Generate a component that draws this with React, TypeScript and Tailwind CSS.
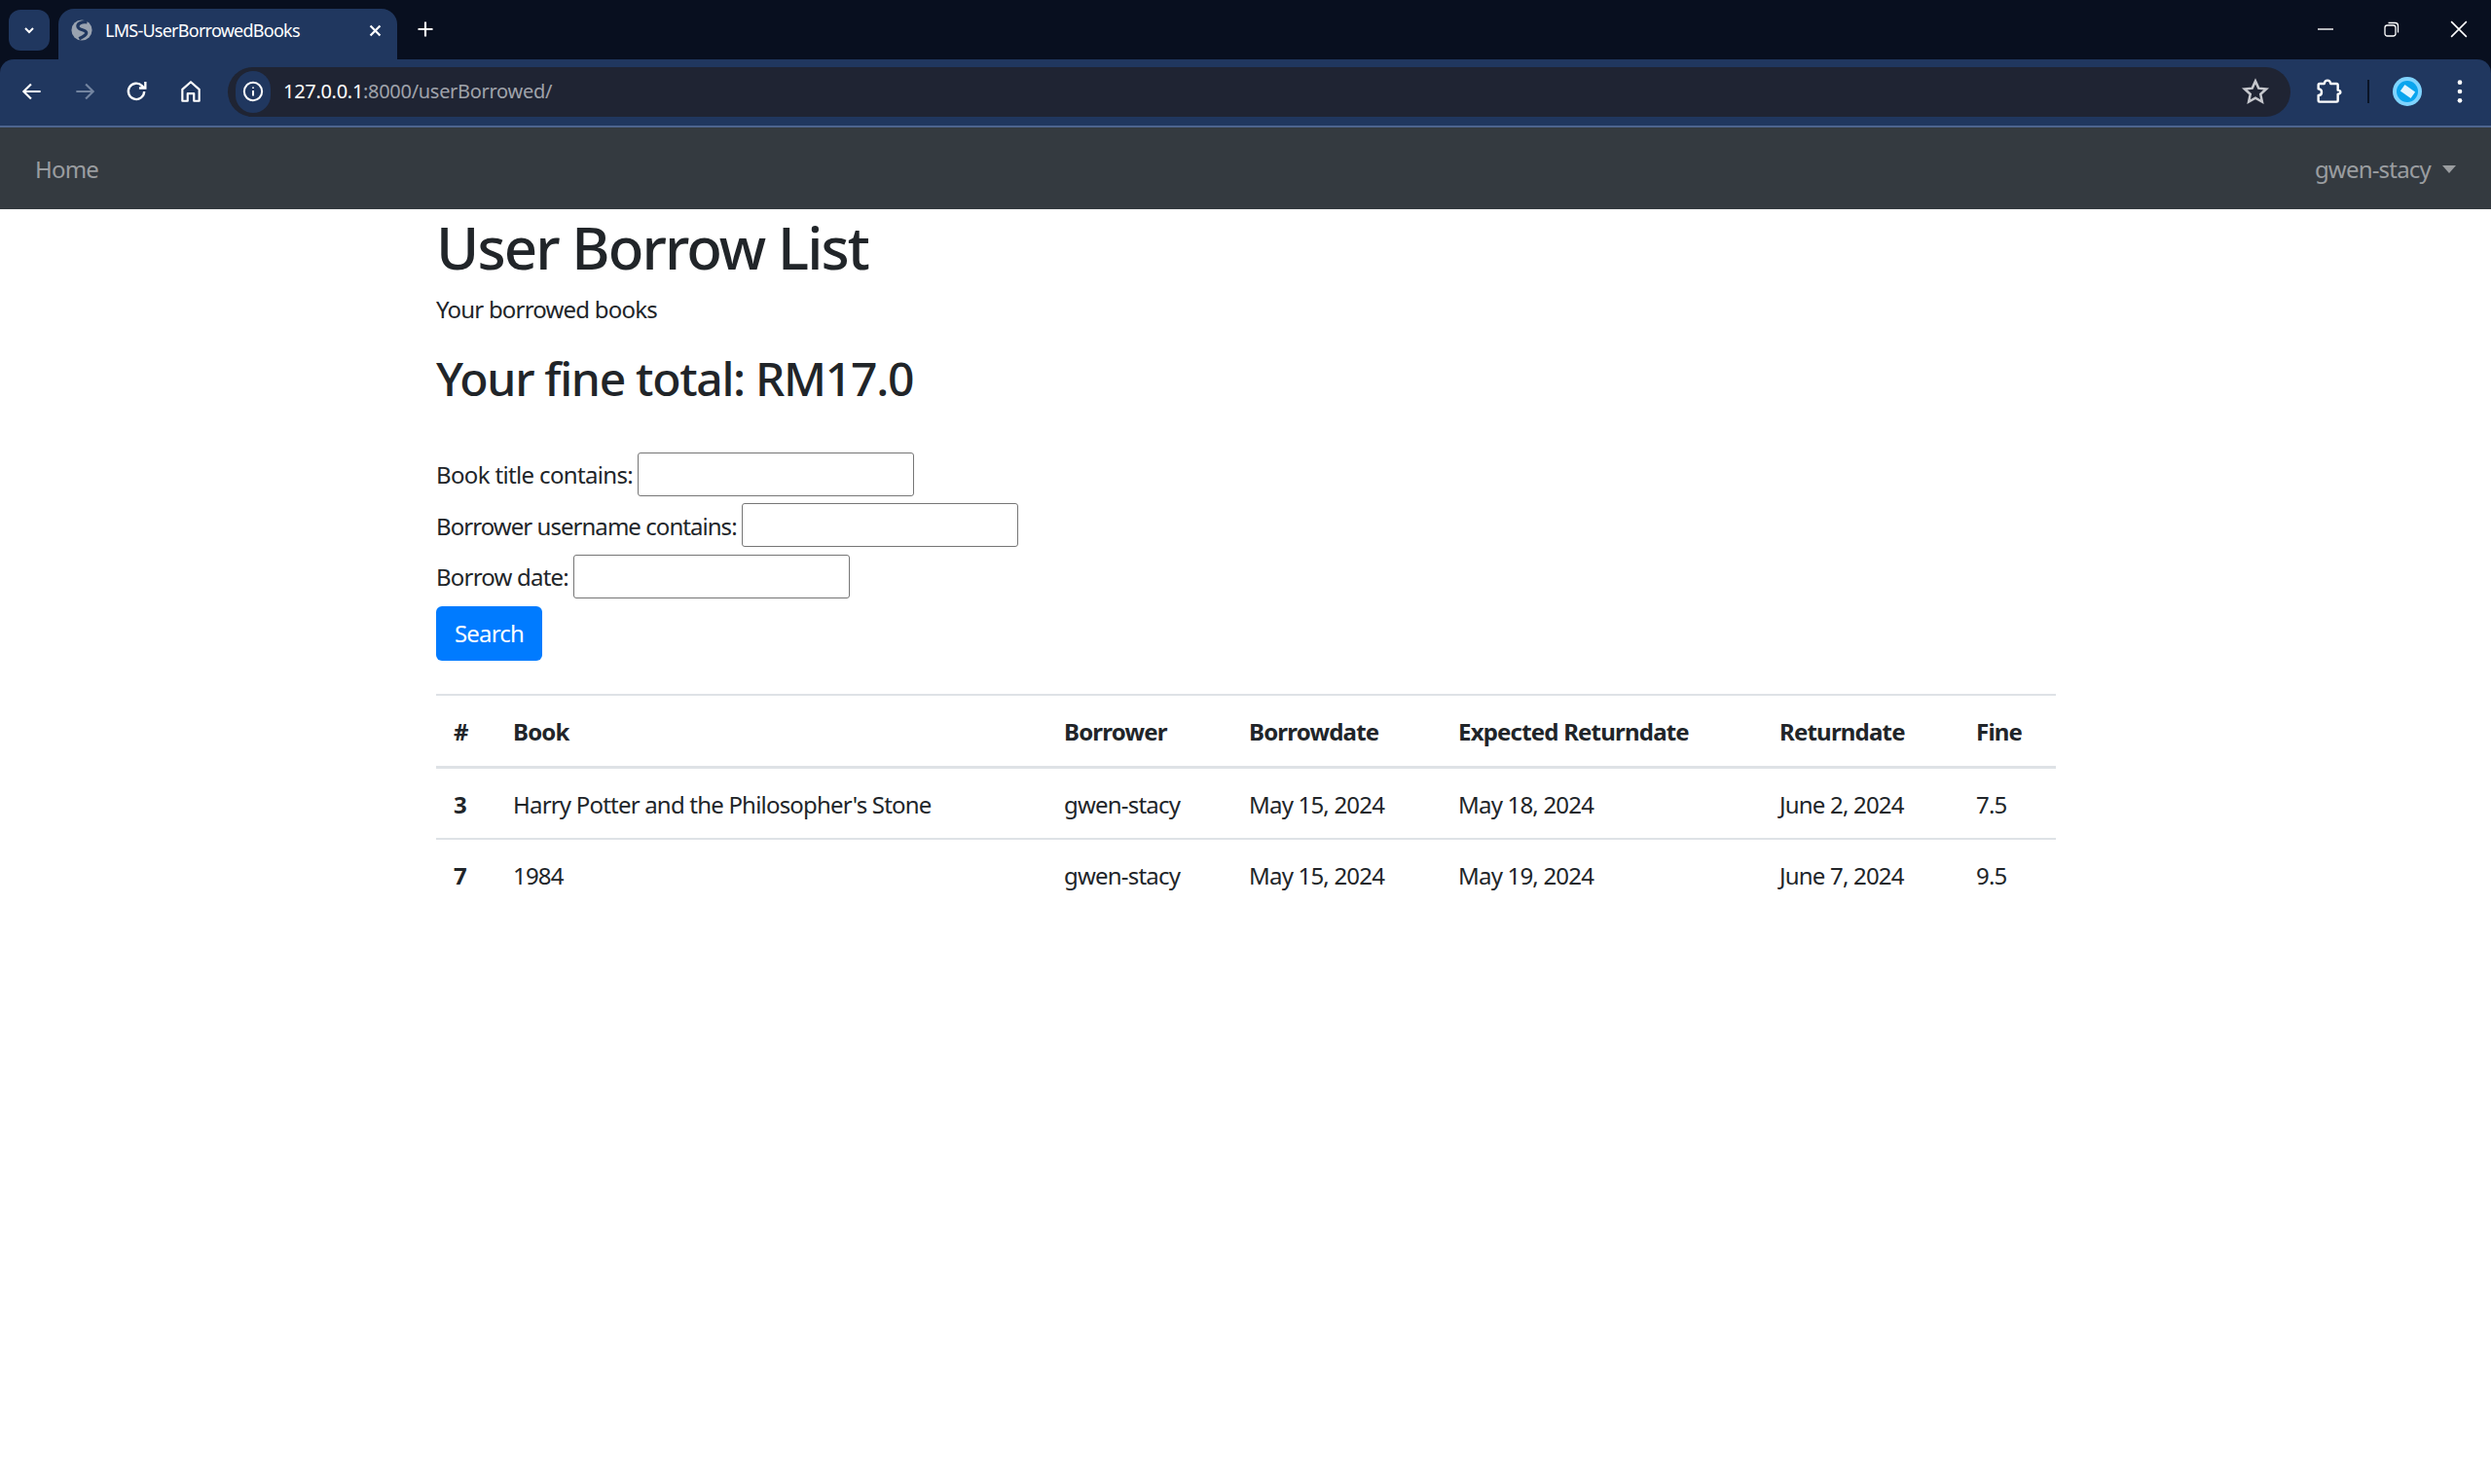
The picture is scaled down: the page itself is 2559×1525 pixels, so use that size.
import React from "react";

const rows = [
  { id: 3, book: "Harry Potter and the Philosopher's Stone", borrower: "gwen-stacy", borrowed: "May 15, 2024", expected: "May 18, 2024", returned: "June 2, 2024", fine: "7.5" },
  { id: 7, book: "1984", borrower: "gwen-stacy", borrowed: "May 15, 2024", expected: "May 19, 2024", returned: "June 7, 2024", fine: "9.5" },
];

const Icon = ({ className, children }: { className?: string; children: React.ReactNode }) => (
  <svg viewBox="0 0 24 24" fill="none" stroke="currentColor" strokeWidth="2" className={className}>
    {children}
  </svg>
);

const BrowserChrome = () => (
  <div className="bg-[#080f1f] text-white">
    <div className="flex h-[61px] items-end">
      <div className="mb-[9px] ml-[9px] flex h-[42px] w-[42px] items-center justify-center rounded-[12px] bg-[#20375f]">
        <svg viewBox="0 0 24 24" className="h-[16px] w-[16px]" fill="none" stroke="white" strokeWidth="3">
          <path d="M6 9l6 6 6-6" />
        </svg>
      </div>
      <div className="ml-[9px] flex h-[52px] w-[348px] items-center rounded-t-[16px] bg-[#20375f] pb-[8px] pl-[13px] pr-[14px]">
        <svg viewBox="0 0 24 24" className="h-[22px] w-[22px] shrink-0">
          <circle cx="12" cy="12" r="11.500" fill="#9aa3b0" />
          <path d="M18 3C12 2 6 5 8 9c2 3.500 8 2 9 5.500 .8 3-4 5-8 7" fill="none" stroke="#20375f" strokeWidth="3.600" />
        </svg>
        <span className="ml-[13px] flex-1 font-['Noto_Sans',sans-serif] text-[18px] tracking-[-0.75px] text-white">LMS-UserBorrowedBooks</span>
        <svg viewBox="0 0 24 24" className="h-[17px] w-[17px]" fill="none" stroke="white" strokeWidth="3.2">
          <path d="M5 5l14 14M19 5L5 19" />
        </svg>
      </div>
      <div className="mb-[11px] ml-[19px] flex h-[40px] w-[20px] items-center justify-center">
        <svg viewBox="0 0 24 24" className="h-[20px] w-[20px]" fill="none" stroke="white" strokeWidth="2.6">
          <path d="M12 3v18M3 12h18" />
        </svg>
      </div>
      <div className="mb-[13px] ml-auto mr-[11px] flex h-[36px] items-center">
        <svg viewBox="0 0 16 16" className="h-[16px] w-[16px]" stroke="white" strokeWidth="1.4"><path d="M0 8h16" /></svg>
        <svg viewBox="0 0 16 16" className="ml-[52px] h-[16px] w-[16px]" fill="none" stroke="white" strokeWidth="1.3">
          <rect x="1" y="4" width="11" height="11" rx="2.5" />
          <path d="M4.5 1.5h7a3 3 0 0 1 3 3v7" />
        </svg>
        <svg viewBox="0 0 16 16" className="ml-[52px] mr-[13px] h-[18px] w-[18px]" stroke="white" strokeWidth="1.4"><path d="M1 1l14 14M15 1L1 15" /></svg>
      </div>
    </div>
    <div className="flex h-[70px] items-center rounded-t-[14px] border-b-[2px] border-[#4d648e] bg-[#20375f] pb-[2px]">
      <Icon className="ml-[20px] h-[26px] w-[26px]"><path d="M20 12H5M11 5l-7 7 7 7" /></Icon>
      <Icon className="ml-[28px] h-[26px] w-[26px] text-[#7384a0]"><path d="M4 12h15M13 5l7 7-7 7" /></Icon>
      <Icon className="ml-[26px] h-[28px] w-[28px]"><path d="M19 12a7 7 0 1 1-2-5l2 2M20 3.5V9h-5.500" /></Icon>
      <Icon className="ml-[29px] h-[26px] w-[26px]"><path d="M4 21V10l8-7 8 7v11h-5v-7H9v7z" strokeLinejoin="round" /></Icon>
      <div className="ml-[25px] flex h-[51px] flex-1 items-center rounded-full bg-[#1f2433] pl-[8px]">
        <div className="flex h-[43px] w-[36px] items-center justify-center rounded-full bg-[#20375f]">
          <svg viewBox="0 0 24 24" className="h-[22px] w-[22px]" fill="none" stroke="white" strokeWidth="2.2">
            <circle cx="12" cy="12" r="10" />
            <path d="M12 11v6M12 7v1.500" />
          </svg>
        </div>
        <span className="ml-[13px] font-['Noto_Sans',sans-serif] text-[20px] tracking-[-0.3px] text-white">
          127.0.0.1<span className="text-[#a0a3ab]">:8000/userBorrowed/</span>
        </span>
        <svg viewBox="0 0 24 24" className="ml-auto mr-[21px] h-[30px] w-[30px]" fill="none" stroke="#c5c7cc" strokeWidth="2">
          <path d="M12 3.500l2.600 5.800 6.300.7-4.700 4.200 1.300 6.200L12 17.300l-5.500 3.100 1.300-6.200L3.100 10l6.300-.7z" />
        </svg>
      </div>
      <svg viewBox="0 0 24 24" className="ml-[22px] h-[32px] w-[32px]" fill="none" stroke="white" strokeWidth="1.800">
        <path d="M6 6h3.500c.3-1.500 1.300-2.500 2.500-2.500s2.200 1 2.500 2.500H19a1 1 0 0 1 1 1v4c1.200.2 2 .8 2 1.500s-.8 1.300-2 1.500v5a1 1 0 0 1-1 1H6a1 1 0 0 1-1-1v-4c1.500 0 2.500-1 2.500-2.500S6.500 10 5 10V7a1 1 0 0 1 1-1z" strokeLinejoin="round" />
      </svg>
      <div className="ml-[25px] h-[24px] w-[2px] bg-[#0a1426]" />
      <div className="ml-[24px] flex h-[30px] w-[30px] items-center justify-center rounded-full bg-[#7fd4ff]">
        <div className="flex h-[22px] w-[22px] items-center justify-center rounded-full bg-[#0aa5ee]">
          <div className="h-[8px] w-[13px] rotate-[35deg] bg-[#e2f5ff]" />
        </div>
      </div>
      <svg viewBox="0 0 24 24" className="ml-[25px] mr-[18px] h-[28px] w-[28px]" fill="white">
        <circle cx="12" cy="4" r="2" />
        <circle cx="12" cy="12" r="2" />
        <circle cx="12" cy="20" r="2" />
      </svg>
    </div>
  </div>
);

const Filter = ({ label, labelClass }: { label: string; labelClass: string }) => (
  <p className="mb-[8.500px] flex h-[44px] items-center">
    <label className={labelClass}>{label}</label>
    <input type="text" className="ml-[5px] h-[45px] w-[284px] rounded-[3px] border border-[#767676] bg-white" />
  </p>
);

export default function App() {
  return (
    <div className="min-h-[1525px] bg-white font-['Noto_Sans',sans-serif] text-[24px] leading-[36px] tracking-[-0.8px] text-[#212529]">
      <BrowserChrome />
      <nav className="flex h-[84px] items-center justify-between bg-[#343a40] px-[36px] pt-[2px] text-[#9a9da0]">
        <span>Home</span>
        <span className="flex items-center">
          gwen-stacy
          <span className="ml-[12px] h-0 w-0 border-x-[7px] border-t-[8px] border-x-transparent border-t-[#9a9da0]" />
        </span>
      </nav>
      <main className="mx-[448px] w-[1664px]">
        <h1 className="pt-[3px] text-[60px] font-medium leading-[72px] tracking-[-1.900px]">User Borrow List</h1>
        <p className="mt-[10px] mb-[24px]">Your borrowed books</p>
        <h2 className="mb-[47px] text-[48px] font-medium leading-[58px] tracking-[-1.300px]">Your fine total: RM17.0</h2>
        <form>
          <Filter label="Book title contains:" labelClass="pt-[2px] tracking-[-0.65px]" />
          <Filter label="Borrower username contains:" labelClass="pt-[2px] tracking-[-0.95px]" />
          <Filter label="Borrow date:" labelClass="pt-[2px] tracking-[-0.8px]" />
          <button type="button" className="h-[56px] w-[109px] rounded-[6px] bg-[#007bff] text-white">Search</button>
        </form>
        <table className="mt-[34px] w-[1664px] table-fixed border-collapse border-t-2 border-[#dee2e6] text-left">
          <thead>
            <tr className="h-[75px] border-b-[3px] border-[#dee2e6]">
              <th className="w-[61px] pl-[18px] pt-[2px] font-bold">#</th>
              <th className="w-[566px] pl-[18px] pt-[2px] font-bold">Book</th>
              <th className="w-[190px] pl-[18px] pt-[2px] font-bold">Borrower</th>
              <th className="w-[215px] pl-[18px] pt-[2px] font-bold">Borrowdate</th>
              <th className="w-[330px] pl-[18px] pt-[2px] font-bold">Expected Returndate</th>
              <th className="w-[202px] pl-[18px] pt-[2px] font-bold">Returndate</th>
              <th className="w-[100px] pl-[18px] pt-[2px] font-bold">Fine</th>
            </tr>
          </thead>
          <tbody>
            {rows.map((row, i) => (
              <tr key={row.id} className={i === 0 ? "h-[73px] border-b-2 border-[#dee2e6]" : "h-[73px]"}>
                <th className="pl-[18px] pt-[3px] font-bold">{row.id}</th>
                <td className="pl-[18px] pt-[3px]">{row.book}</td>
                <td className="pl-[18px] pt-[3px]">{row.borrower}</td>
                <td className="pl-[18px] pt-[3px]">{row.borrowed}</td>
                <td className="pl-[18px] pt-[3px]">{row.expected}</td>
                <td className="pl-[18px] pt-[3px]">{row.returned}</td>
                <td className="pl-[18px] pt-[3px]">{row.fine}</td>
              </tr>
            ))}
          </tbody>
        </table>
      </main>
    </div>
  );
}
